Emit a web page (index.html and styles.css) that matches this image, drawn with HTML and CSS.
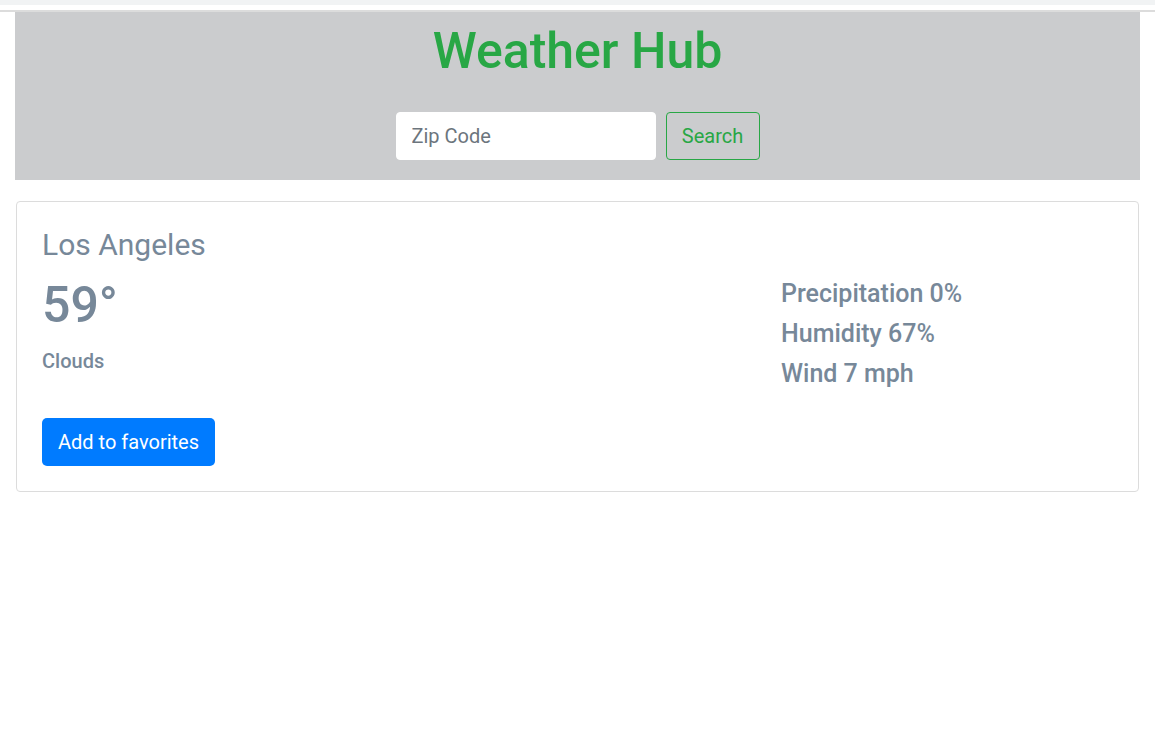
FILE: index.html
```html
<!DOCTYPE html>
<html lang="en">
<head>
<meta charset="utf-8">
<title>Weather Hub</title>
<link rel="stylesheet" href="styles.css">
</head>
<body>
<div class="topbar"></div>
<div class="topline"></div>
<div class="page">
  <header class="hero">
    <h1 class="title">Weather Hub</h1>
    <form class="search">
      <input class="zip" type="text" placeholder="Zip Code">
      <button class="search-btn" type="button">Search</button>
    </form>
  </header>
  <section class="card">
    <h3 class="city">Los Angeles</h3>
    <div class="row">
      <div class="main">
        <div class="temp">59°</div>
        <h5 class="cond">Clouds</h5>
        <button class="fav-btn" type="button">Add to favorites</button>
      </div>
      <div class="details">
        <h4 class="detail">Precipitation 0%</h4>
        <h4 class="detail">Humidity 67%</h4>
        <h4 class="detail">Wind 7 mph</h4>
      </div>
    </div>
  </section>
</div>
</body>
</html>
```

FILE: styles.css
```css
* { box-sizing: border-box; }
html, body {
  margin: 0;
  padding: 0;
  background: #fff;
  font-family: Roboto, "Liberation Sans", Arial, sans-serif;
}
.topbar { height: 5px; background: #f1f3f4; }
.topline { height: 2px; margin-top: 5px; background: #dcdcdc; }
.page { padding: 0 15px; }
.hero {
  background: #cbccce;
  padding: 9px 0 20px;
  display: flex;
  flex-direction: column;
  align-items: center;
}
.title {
  margin: 0;
  font-size: 50px;
  line-height: 60px;
  font-weight: 500;
  color: #28a745;
}
.search {
  margin-top: 31px;
  display: flex;
  gap: 10px;
}
.zip {
  width: 260px;
  height: 48px;
  border: 1px solid #fff;
  border-radius: 4px;
  padding: 0 15px;
  font-family: inherit;
  font-size: 20px;
  color: #495057;
  background: #fff;
  outline: none;
}
.zip::placeholder { color: #6c757d; }
.search-btn {
  width: 94px;
  height: 48px;
  border: 1px solid #28a745;
  border-radius: 4px;
  background: transparent;
  color: #28a745;
  font-family: inherit;
  font-size: 20px;
  padding: 0;
}
.card {
  margin: 21px 1px 0;
  border: 1px solid #dcdcdc;
  border-radius: 4px;
  padding: 25px 25px 25px;
  color: #778899;
}
.city {
  margin: 0;
  font-size: 30px;
  line-height: 36px;
  font-weight: 400;
}
.row {
  margin-top: 12px;
  display: grid;
  grid-template-columns: 1fr 332px;
  gap: 30px;
  align-items: start;
}
.main {
  display: flex;
  flex-direction: column;
  align-items: flex-start;
}
.temp {
  font-size: 50px;
  line-height: 60px;
  font-weight: 500;
}
.cond {
  margin: 13.5px 0 0;
  font-size: 20px;
  line-height: 24px;
  font-weight: 500;
}
.details { padding-top: 3px; }
.detail {
  margin: 0 0 8px;
  font-size: 25px;
  line-height: 32px;
  font-weight: 500;
}
.fav-btn {
  margin-top: 45px;
  height: 48px;
  padding: 0 16px;
  border: none;
  border-radius: 5px;
  background: #007bff;
  color: #fff;
  font-family: inherit;
  font-size: 20px;
}
```
